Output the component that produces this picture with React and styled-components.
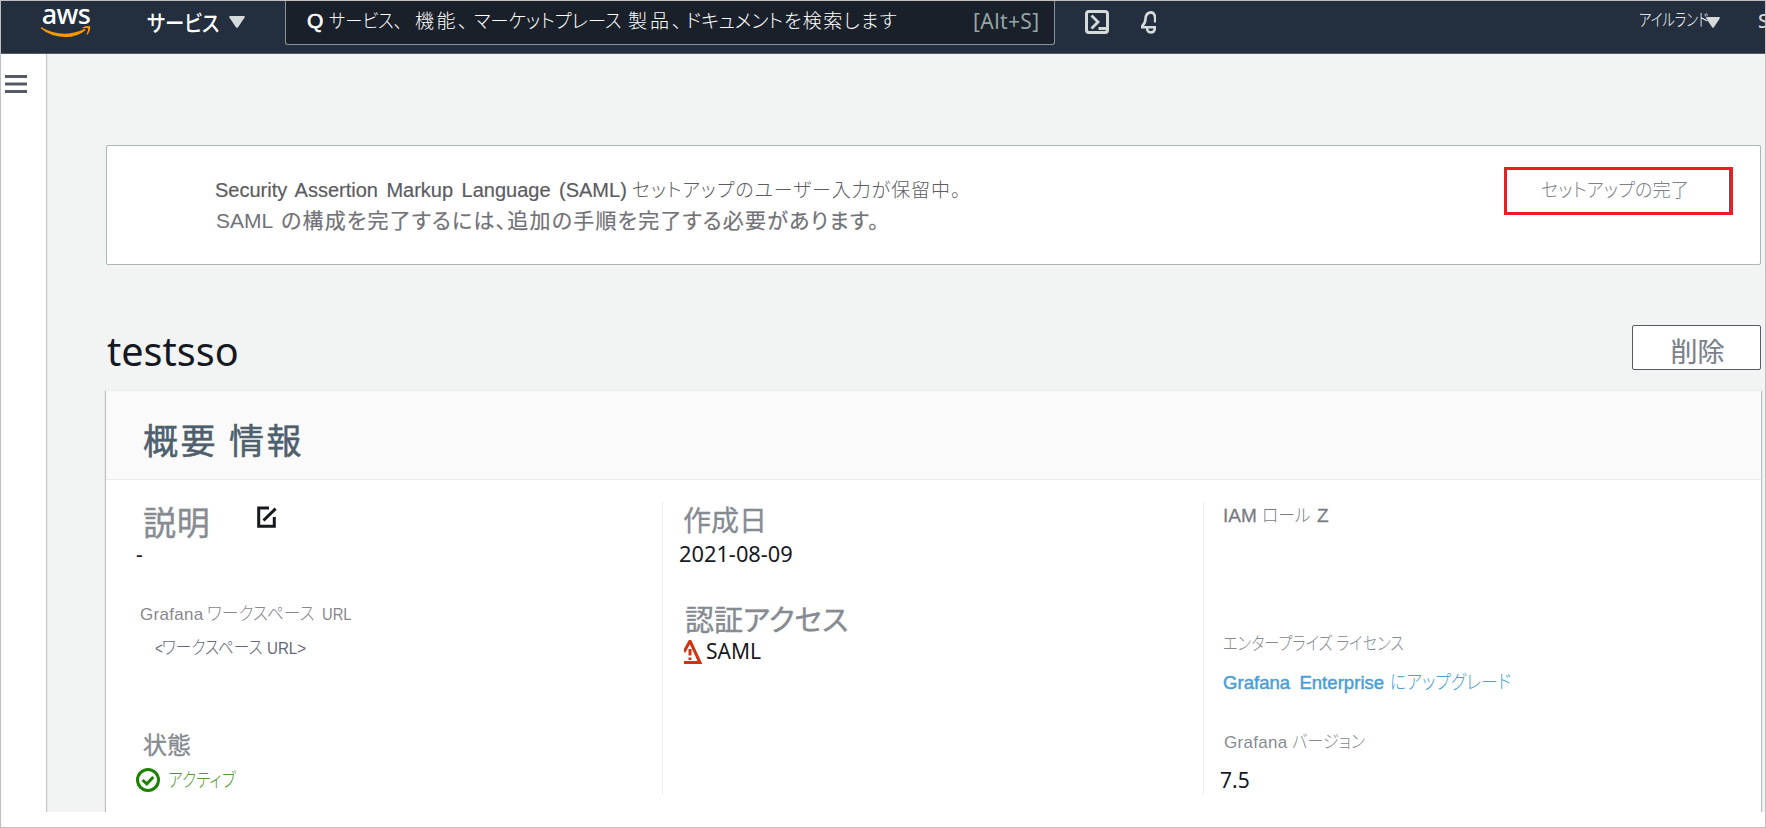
import React from "react";
import styled, { createGlobalStyle } from "styled-components";

const JP = '"Noto Sans CJK JP", sans-serif';
const ARIAL = '"Liberation Sans", "Noto Sans CJK JP", sans-serif';
const EMBER = '"Noto Sans", "Noto Sans CJK JP", sans-serif';

const GlobalStyle = createGlobalStyle`
  * { box-sizing: border-box; }
  body { margin: 0; background: #fff; }
`;

const Page = styled.div`
  width: 1766px;
  height: 828px;
  border: 1px solid #c0c0c0;
  background: #fff;
  overflow: hidden;
  font-family: ${ARIAL};
  font-size: 18px;
`;

/* A stretch of text with its own width, tracking and horizontal condensing. */
const Run = styled.span`
  display: inline-block;
  flex: none;
  white-space: pre;
  line-height: 1;
  font-family: ${(p) => p.$font || JP};
  font-size: ${(p) => p.$size}px;
  font-weight: ${(p) => p.$weight || 350};
  font-feature-settings: "palt";
  color: ${(p) => p.$color || "inherit"};
  letter-spacing: ${(p) => p.$track || 0}px;
  word-spacing: ${(p) => p.$words || 0}px;
  width: ${(p) => (p.$w ? `${p.$w}px` : "auto")};
  margin-left: ${(p) => p.$ml || 0}px;
  margin-top: ${(p) => p.$mt || 0}px;
  transform: scaleX(${(p) => p.$sx || 1});
  transform-origin: left center;
  -webkit-text-stroke: ${(p) => p.$stroke || 0}px currentColor;
`;

const TopBar = styled.header`
  display: flex;
  height: 53px;
  background: #232f3e;
  border-bottom: 1px solid #545b64;
  color: #fff;
`;

const Logo = styled.div`
  width: 52px;
  margin-left: 39px;
  display: flex;
  flex-direction: column;
  align-items: center;
`;

const LogoText = styled.div`
  height: 24px;
  line-height: 25px;
  font-family: ${EMBER};
  font-size: 27px;
  font-weight: 500;
  letter-spacing: -0.6px;
`;

const Services = styled.div`
  display: flex;
  align-items: flex-start;
  width: 193px;
  padding: 9px 0 0 55px;
`;

const Caret = styled.svg`
  flex: none;
  width: ${(p) => p.$w}px;
  height: ${(p) => p.$h}px;
  margin: ${(p) => p.$m};
  fill: #d5dbdb;
`;

const Search = styled.div`
  display: flex;
  width: 770px;
  height: 44px;
  padding: 9px 0 0 20px;
  background: #1a202a;
  border: 1px solid #879596;
  border-top: 0;
  border-radius: 0 0 3px 3px;
`;

const BarIcon = styled.svg`
  flex: none;
  width: ${(p) => p.$w}px;
  height: ${(p) => p.$h}px;
  margin: ${(p) => p.$m};
  fill: none;
  stroke: #d5dbdb;
`;

const Region = styled.div`
  display: flex;
  flex: none;
  margin-left: auto;
  width: 126px;
  padding-top: 9px;
`;

const Body = styled.div`
  display: flex;
  height: 758px;
`;

const Sidebar = styled.nav`
  flex: none;
  width: 46px;
  padding: 21px 0 0 4px;
  border-right: 1px solid #c0c6ca;
  background: #fff;
`;

const Hamburger = styled.svg`
  display: block;
  width: 22px;
  height: 18px;
  fill: #545b64;
`;

const Main = styled.main`
  flex: 1;
  padding: 91px 4px 0 59px;
  background: #f2f3f3;
  overflow: hidden;
  box-shadow: inset 1px 0 0 #e6e9ea;
`;

const Banner = styled.section`
  display: flex;
  justify-content: space-between;
  height: 120px;
  padding: 21px 27px 0 108px;
  background: #fff;
  border: 1px solid #aab7b8;
  border-radius: 2px;
`;

const BannerText = styled.div`
  padding-top: 7px;
`;

const Line = styled.div`
  display: block;
  height: ${(p) => p.$h}px;
  line-height: ${(p) => p.$h}px;
  margin-top: ${(p) => p.$mt || 0}px;
  padding-left: ${(p) => p.$pl || 0}px;
  font-family: ${(p) => p.$font || ARIAL};
  font-size: ${(p) => p.$size || 18}px;
  color: ${(p) => p.$color || "#868b92"};
  white-space: nowrap;
`;

const IconLine = styled(Line)`
  display: flex;
  align-items: center;
`;

const SetupButton = styled.button`
  width: 229px;
  height: 48px;
  padding: 0 0 4px 34px;
  border: 3px solid #ed1c24;
  background: #fff;
  box-shadow: inset -1px 0 0 #545b64;
  text-align: left;
  color: #7d828a;
`;

const TitleRow = styled.div`
  display: flex;
  justify-content: space-between;
  align-items: flex-start;
  height: 45px;
  margin-top: 60px;
`;

const Title = styled.h1`
  margin: 1px 0 0 1px;
  font: 400 39.6px/50px ${EMBER};
  color: #16191f;
`;

const DeleteButton = styled.button`
  width: 129px;
  height: 45px;
  padding: 7px 0 0 2px;
  border: 1px solid #545b64;
  border-radius: 2px;
  background: #fff;
  color: #7a8289;
`;

const Card = styled.section`
  height: 440px;
  margin-top: 20px;
  border-top: 1px solid #eaeded;
  background: #fff;
  box-shadow: 0 1px 1px 0 rgba(0, 28, 36, 0.3), 1px 1px 1px 0 rgba(0, 28, 36, 0.2),
    -1px 1px 1px 0 rgba(0, 28, 36, 0.2);
`;

const CardHeader = styled.div`
  display: flex;
  align-items: center;
  height: 89px;
  padding: 6px 0 0 37px;
  background: #fafafa;
  border-bottom: 1px solid #eaeded;
  color: #4e5f6e;
`;

const Columns = styled.div`
  display: grid;
  grid-template-columns: 556px 541px 1fr;
  height: 315px;
  padding-top: 22px;
`;

const Column = styled.div`
  height: 293px;
  padding-left: ${(p) => p.$pl}px;
  border-left: ${(p) => (p.$divided ? "1px solid #eaeded" : "0")};
`;

const StatusIcon = styled.svg`
  flex: none;
  width: ${(p) => p.$w}px;
  height: 24px;
`;

const EditIcon = styled.svg`
  flex: none;
  width: 20px;
  height: 22px;
  margin: -8px 0 0 47px;
  fill: none;
  stroke: #16191f;
  stroke-width: 3;
`;

function Down({ w, h, m }) {
  return (
    <Caret $w={w} $h={h} $m={m} viewBox="0 0 16 12" preserveAspectRatio="none">
      <path d="M1.2 0H14.8Q16.4 0.3 15.5 1.8L9 11.2Q8 12.4 7 11.2L0.5 1.8Q-0.4 0.3 1.2 0Z" />
    </Caret>
  );
}

export default function App() {
  return (
    <Page>
      <GlobalStyle />
      <TopBar>
        <Logo>
          <LogoText>aws</LogoText>
          <svg width="52" height="14" viewBox="0 0 52 14">
            <path d="M1.2 2.2Q22 14 44 4.2Q46 3.6 45.2 5.4Q37 12 26 12Q11 12 1 3.4Q0.4 2.4 1.2 2.2Z" fill="#ff9900" />
            <path d="M42.4 2.4Q46 0.2 50 1.2Q51 4.6 47.6 9.6Q46.4 10.4 46.8 8.8Q48.6 4.8 48.2 3.2Q46 2.8 42.6 3.4Z" fill="#ff9900" />
          </svg>
        </Logo>
        <Services>
          <Run $size={22} $weight={500} $sx={0.88} $w={82}>サービス</Run>
          <Down w={16} h={12} m="6px 0 0 0" />
        </Services>
        <Search>
          <Run $font={ARIAL} $size={21} $stroke={0.6} $w={22} $ml={1}>Q</Run>
          <Run $size={19} $w={86} $sx={0.91} $weight={300}>サービス、</Run>
          <Run $size={19} $w={59} $track={2.5} $weight={300}>機能、</Run>
          <Run $size={19} $w={154} $sx={0.97} $weight={300}>マーケットプレース</Run>
          <Run $size={19} $w={58} $track={3} $weight={300}>製品、</Run>
          <Run $size={19} $w={98} $weight={300}>ドキュメント</Run>
          <Run $size={19} $w={188} $track={1.3} $weight={300}>を検索します</Run>
          <Run $font={EMBER} $size={21} $color="#95a5a6" $weight={400} $track={0.4} $ml={1} $mt={1}>[Alt+S]</Run>
        </Search>
        <BarIcon $w={24} $h={24} $m="9px 0 0 30px" viewBox="0 0 24 24">
          <rect x="1.5" y="1.5" width="21" height="21" rx="2.5" strokeWidth="3" />
          <path d="M6.5 5.5L13 12L6.5 18.5M13.5 18.5H21" strokeWidth="2.8" />
        </BarIcon>
        <BarIcon $w={15} $h={23} $m="10px 0 0 32px" viewBox="0 0 15 23">
          <path d="M14.2 11.5V6.5Q13.4 1.5 9.8 1.4Q4.6 1.8 4.4 8.6Q4.4 12 1.3 15V16.2H15M6 17Q6.2 21.4 9.8 21.4Q13.6 21.4 13.8 17" strokeWidth="2.6" />
        </BarIcon>
        <Region>
          <Run $size={17} $w={67} $sx={0.78} $weight={300}>アイルランド</Run>
          <Down w={14} h={11} m="7px 0 0 0" />
          <Run $font={EMBER} $size={19} $weight={500} $color="#d5dbdb" $ml={38} $mt={2}>S</Run>
        </Region>
      </TopBar>
      <Body>
        <Sidebar>
          <Hamburger viewBox="0 0 22 18">
            <path d="M0 0H22V3H0ZM0 7.5H22V10.5H0ZM0 15H22V18H0Z" />
          </Hamburger>
        </Sidebar>
        <Main>
          <Banner>
            <BannerText>
              <Line $h={32} $size={20} $color="#5c5c62">
                <Run $font={ARIAL} $size={20} $w={417} $words={2.9} $stroke={0.2}>
                  Security Assertion Markup Language (SAML)
                </Run>
                <Run $size={19} $weight={300} $track={0.9}>セットアップのユーザー入力が保留中。</Run>
              </Line>
              <Line $h={32} $mt={-1} $size={21} $color="#727278">
                <Run $font={ARIAL} $size={21} $w={65} $ml={1}>SAML</Run>
                <Run $size={21} $weight={400} $track={1.2} $stroke={0.2}>
                  の構成を完了するには、追加の手順を完了する必要があります。
                </Run>
              </Line>
            </BannerText>
            <SetupButton>
              <Run $size={19} $weight={300} $sx={0.96}>セットアップの完了</Run>
            </SetupButton>
          </Banner>
          <TitleRow>
            <Title>testsso</Title>
            <DeleteButton>
              <Run $size={27} $weight={400} $stroke={0.2}>削除</Run>
            </DeleteButton>
          </TitleRow>
          <Card>
            <CardHeader>
              <Run $size={35} $weight={400} $track={2.5} $w={86} $stroke={0.5}>概要</Run>
              <Run $size={35} $weight={400} $track={2.5} $stroke={0.5}>情報</Run>
            </CardHeader>
            <Columns>
              <Column $pl={30}>
                <IconLine $h={36} $mt={1} $pl={7}>
                  <Run $size={33} $weight={400} $w={67} $track={0.8} $stroke={0.4}>説明</Run>
                  <EditIcon viewBox="0 0 20 22">
                    <path d="M12 2H1.7V20.2H17.3V11M6.5 14.5L18.6 2.6" />
                  </EditIcon>
                </IconLine>
                <Line $h={30} $font={EMBER} $size={21} $color="#16191f">-</Line>
                <Line $h={24} $mt={34} $pl={4} $size={17} $color="#87878d">
                  <Run $font={ARIAL} $size={17} $w={67} $track={0.3}>Grafana</Run>
                  <Run $size={18} $weight={300} $w={115} $sx={0.93}>ワークスペース</Run>
                  <Run $font={ARIAL} $size={17} $sx={0.87}>URL</Run>
                </Line>
                <Line $h={24} $mt={10} $pl={19} $size={17} $color="#66687a">
                  <Run $font={ARIAL} $size={17} $w={7} $sx={0.8}>&lt;</Run>
                  <Run $size={18} $weight={300} $w={105} $sx={0.87}>ワークスペース</Run>
                  <Run $font={ARIAL} $size={17} $sx={0.89}>URL&gt;</Run>
                </Line>
                <IconLine $h={30} $mt={68} $pl={7}>
                  <Run $size={24} $weight={400} $stroke={0.3}>状態</Run>
                </IconLine>
                <IconLine $h={24} $mt={9} $color="#4f9a35">
                  <StatusIcon $w={24} viewBox="0 0 24 24">
                    <circle cx="12" cy="12" r="10.5" fill="none" stroke="#1d8102" strokeWidth="3" />
                    <path d="M6.5 12L10.8 15.8L17.3 9" fill="none" stroke="#1d8102" strokeWidth="3" />
                  </StatusIcon>
                  <Run $size={19} $weight={300} $sx={0.83} $ml={8} $mt={-4}>アクティブ</Run>
                </IconLine>
              </Column>
              <Column $divided $pl={16}>
                <IconLine $h={34} $pl={4}>
                  <Run $size={28} $weight={400} $stroke={0.3}>作成日</Run>
                </IconLine>
                <Line $h={30} $mt={3} $font={EMBER} $size={21.8} $color="#16191f">2021-08-09</Line>
                <IconLine $h={36} $mt={31} $pl={6}>
                  <Run $size={29} $weight={400} $stroke={0.4}>認証アクセス</Run>
                </IconLine>
                <IconLine $h={30} $mt={1} $pl={5} $font={EMBER} $size={21} $color="#16191f">
                  <StatusIcon $w={18} viewBox="0 0 18 24">
                    <path d="M0 12L6 1L16 22.5H0" fill="none" stroke="#d13212" strokeWidth="3" />
                    <path d="M6 9V15.5M6 17.5V20" fill="none" stroke="#d13212" strokeWidth="3" />
                  </StatusIcon>
                  <Run $font={EMBER} $size={21} $weight={400} $ml={4} $mt={-1}>SAML</Run>
                </IconLine>
              </Column>
              <Column $divided $pl={19}>
                <Line $h={24} $mt={2} $size={19} $color="#7a7c84">
                  <Run $font={ARIAL} $size={19} $w={39} $stroke={0.3}>IAM</Run>
                  <Run $size={18} $weight={300} $w={55} $sx={0.93}>ロール</Run>
                  <Run $font={ARIAL} $size={19} $stroke={0.3}>Z</Run>
                </Line>
                <Line $h={24} $mt={104}>
                  <Run $size={18} $weight={300} $sx={0.845}>エンタープライズ ライセンス</Run>
                </Line>
                <Line $h={24} $mt={15} $size={19} $color="#4a9fd4">
                  <Run $font={ARIAL} $size={18.5} $w={167} $words={4} $track={0.05} $stroke={0.5}>Grafana Enterprise</Run>
                  <Run $size={19} $weight={300} $sx={0.89}>にアップグレード</Run>
                </Line>
                <Line $h={24} $mt={35} $pl={1}>
                  <Run $font={ARIAL} $size={17} $w={68} $track={0.3}>Grafana</Run>
                  <Run $size={18} $weight={300} $sx={0.9}>バージョン</Run>
                </Line>
                <Line $h={30} $mt={11} $font={EMBER} $size={21} $color="#16191f">
                  <Run $font={EMBER} $size={21} $weight={400} $ml={-3}>7.5</Run>
                </Line>
              </Column>
            </Columns>
          </Card>
        </Main>
      </Body>
    </Page>
  );
}
